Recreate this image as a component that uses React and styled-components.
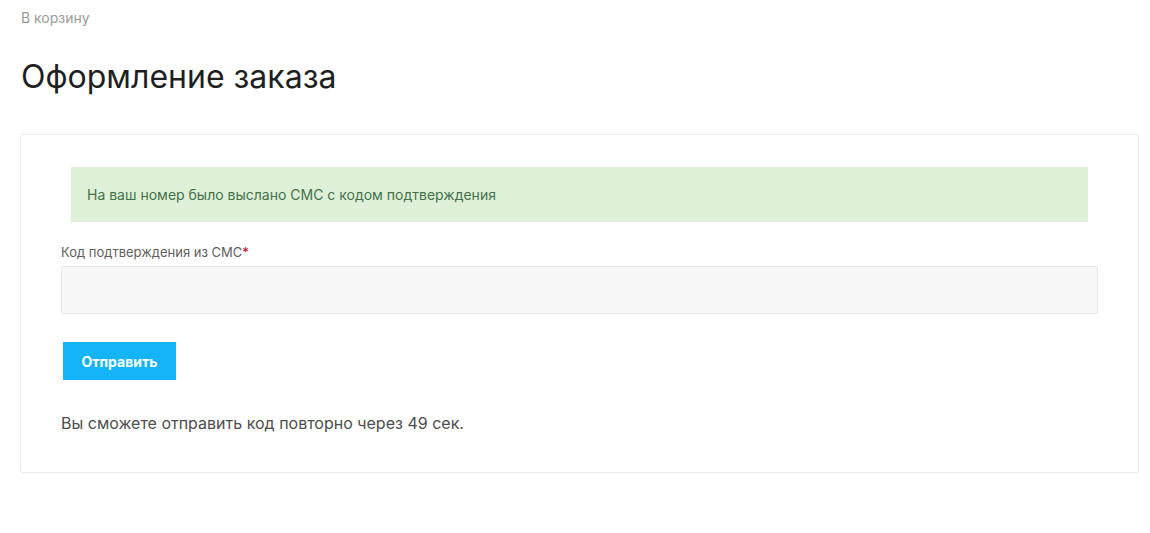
import React from "react"
import styled, { createGlobalStyle } from "styled-components"

const GlobalStyle = createGlobalStyle`
  html, body {
    margin: 0;
    padding: 0;
    background: #fff;
  }
  body {
    font-family: Inter, "Noto Sans", Arial, sans-serif;
    color: #222;
  }
`

const Page = styled.div`
  padding: 0 11px 0 20px;
  width: 1150px;
  box-sizing: border-box;
`

const BackLink = styled.a`
  display: block;
  font-size: 14px;
  line-height: 16px;
  color: #999;
  text-decoration: none;
  padding-top: 10px;
  margin-left: 1px;
`

const Title = styled.h1`
  font-size: 32px;
  font-weight: 400;
  line-height: 40px;
  color: #1f1f1f;
  margin: 31px 0 0 1px;
`

const Card = styled.div`
  margin-top: 37px;
  border: 1px solid #ebebeb;
  border-radius: 2px;
  padding: 32px 40px 38px;
  width: 1119px;
  box-sizing: border-box;
`

const Alert = styled.div`
  margin: 0 10px;
  background: #dff0d8;
  color: #44714a;
  font-size: 14px;
  line-height: 20px;
  padding: 18px 16px 17px;
`

const Field = styled.div`
  margin-top: 22px;
`

const Label = styled.label`
  display: block;
  font-size: 13px;
  line-height: 16px;
  color: #5f5f5f;
  margin-bottom: 6px;
  span {
    color: #d0021b;
  }
`

const Input = styled.input`
  display: block;
  width: 100%;
  height: 48px;
  box-sizing: border-box;
  border: 1px solid #e8e8e8;
  border-radius: 2px;
  background: #f7f7f7;
  outline: none;
  font-family: inherit;
  font-size: 14px;
  padding: 0 16px;
`

const Button = styled.button`
  display: block;
  margin: 28px 0 0 2px;
  width: 113px;
  height: 38px;
  border: 0;
  border-radius: 0;
  background: #13b5f8;
  color: #fff;
  font-family: inherit;
  font-size: 14px;
  font-weight: 700;
  cursor: pointer;
`

const Note = styled.p`
  margin: 32px 0 0;
  font-size: 16px;
  line-height: 22px;
  color: #4d4d4d;
`

export default function App() {
  return (
    <>
      <GlobalStyle />
      <Page>
        <BackLink href="#">В корзину</BackLink>
        <Title>Оформление заказа</Title>
        <Card>
          <Alert>На ваш номер было выслано СМС с кодом подтверждения</Alert>
          <Field>
            <Label>
              Код подтверждения из СМС<span>*</span>
            </Label>
            <Input type="text" />
          </Field>
          <Button>Отправить</Button>
          <Note>Вы сможете отправить код повторно через 49 сек.</Note>
        </Card>
      </Page>
    </>
  )
}
